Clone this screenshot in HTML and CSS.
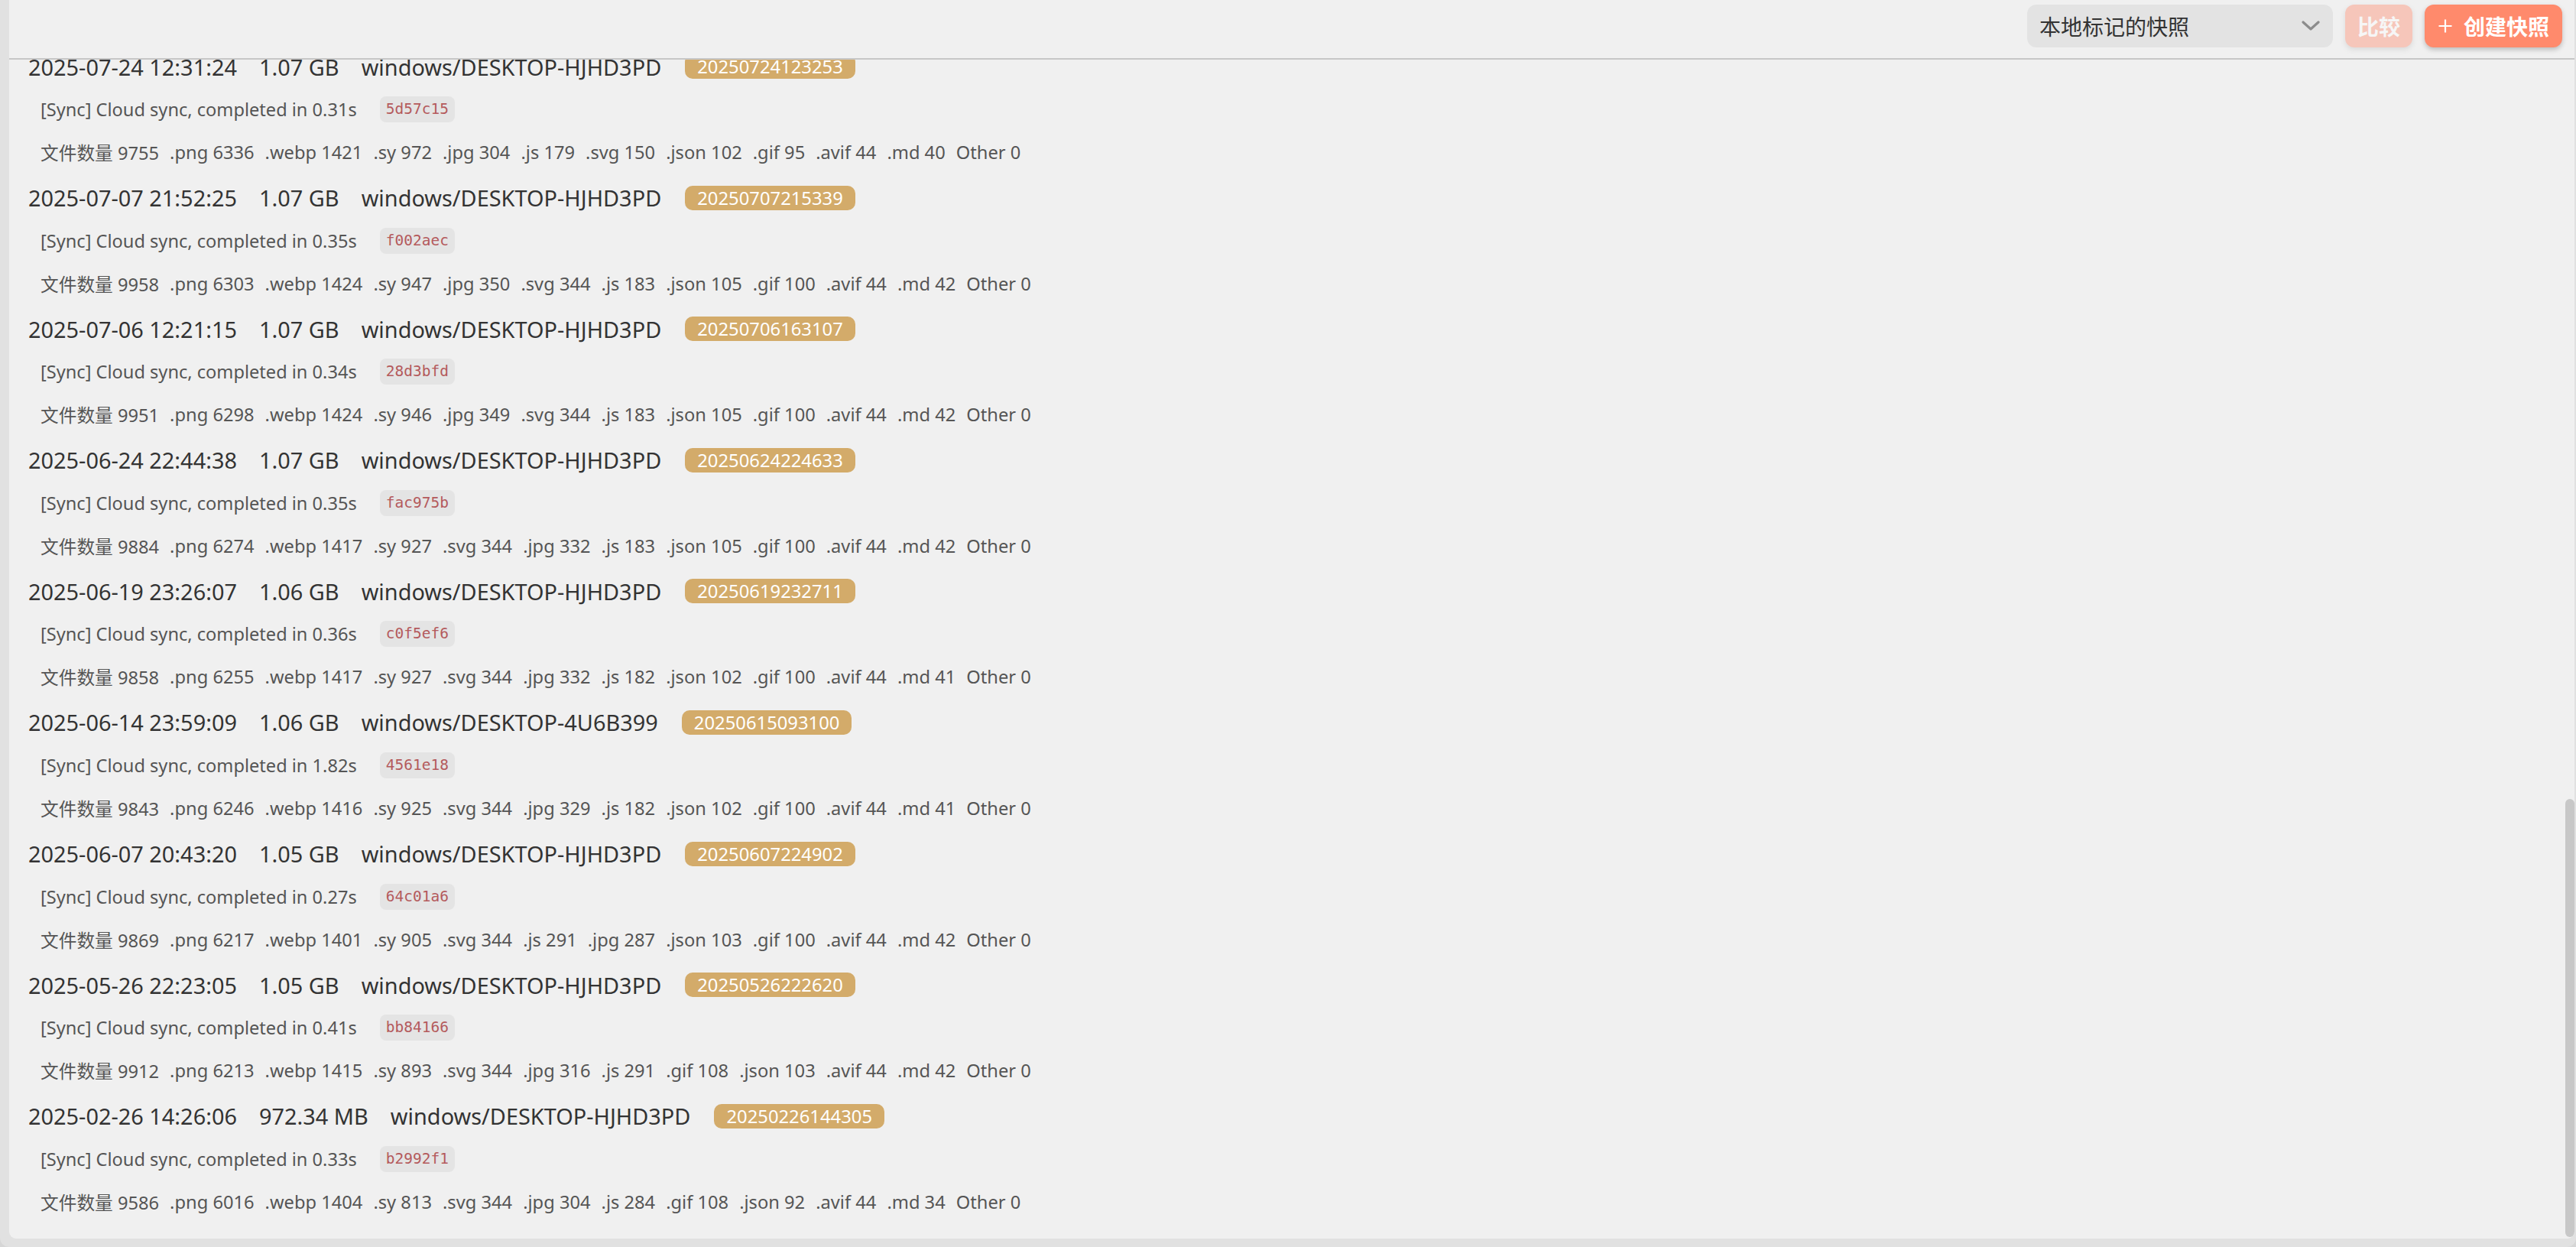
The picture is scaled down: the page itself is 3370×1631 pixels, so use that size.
FILE: index.html
```html
<!DOCTYPE html>
<html lang="zh-CN">
<head>
<meta charset="utf-8">
<title>快照</title>
<link rel="stylesheet" href="styles.css">
</head>
<body>
<div class="frame">
  <div class="panel">
    <div class="toolbar">
      <div class="select">
        <span class="select-text">本地标记的快照</span>
        <svg class="chevron" width="24" height="14" viewBox="0 0 24 14"><polyline points="2,2 12,11 22,2" fill="none" stroke="#8c8c8c" stroke-width="3.2" stroke-linecap="round" stroke-linejoin="round"/></svg>
      </div>
      <button class="btn btn-disabled">比较</button>
      <button class="btn"><svg class="plus" width="18" height="18" viewBox="0 0 18 18"><path d="M9 0.5 V17.5 M0.5 9 H17.5" stroke="#fff" stroke-width="2.2" fill="none"/></svg>创建快照</button>
    </div>
    <div class="list">
      <div class="list-inner">

        <div class="row">
          <div class="head"><span>2025-07-24 12:31:24</span><span>1.07 GB</span><span>windows/DESKTOP-HJHD3PD</span><span class="badge">20250724123253</span></div>
          <div class="sync"><span>[Sync] Cloud sync, completed in 0.31s</span><code class="hash">5d57c15</code></div>
          <div class="files"><span>文件数量 9755</span><span>.png 6336</span><span>.webp 1421</span><span>.sy 972</span><span>.jpg 304</span><span>.js 179</span><span>.svg 150</span><span>.json 102</span><span>.gif 95</span><span>.avif 44</span><span>.md 40</span><span>Other 0</span></div>
        </div>

        <div class="row">
          <div class="head"><span>2025-07-07 21:52:25</span><span>1.07 GB</span><span>windows/DESKTOP-HJHD3PD</span><span class="badge">20250707215339</span></div>
          <div class="sync"><span>[Sync] Cloud sync, completed in 0.35s</span><code class="hash">f002aec</code></div>
          <div class="files"><span>文件数量 9958</span><span>.png 6303</span><span>.webp 1424</span><span>.sy 947</span><span>.jpg 350</span><span>.svg 344</span><span>.js 183</span><span>.json 105</span><span>.gif 100</span><span>.avif 44</span><span>.md 42</span><span>Other 0</span></div>
        </div>

        <div class="row">
          <div class="head"><span>2025-07-06 12:21:15</span><span>1.07 GB</span><span>windows/DESKTOP-HJHD3PD</span><span class="badge">20250706163107</span></div>
          <div class="sync"><span>[Sync] Cloud sync, completed in 0.34s</span><code class="hash">28d3bfd</code></div>
          <div class="files"><span>文件数量 9951</span><span>.png 6298</span><span>.webp 1424</span><span>.sy 946</span><span>.jpg 349</span><span>.svg 344</span><span>.js 183</span><span>.json 105</span><span>.gif 100</span><span>.avif 44</span><span>.md 42</span><span>Other 0</span></div>
        </div>

        <div class="row">
          <div class="head"><span>2025-06-24 22:44:38</span><span>1.07 GB</span><span>windows/DESKTOP-HJHD3PD</span><span class="badge">20250624224633</span></div>
          <div class="sync"><span>[Sync] Cloud sync, completed in 0.35s</span><code class="hash">fac975b</code></div>
          <div class="files"><span>文件数量 9884</span><span>.png 6274</span><span>.webp 1417</span><span>.sy 927</span><span>.svg 344</span><span>.jpg 332</span><span>.js 183</span><span>.json 105</span><span>.gif 100</span><span>.avif 44</span><span>.md 42</span><span>Other 0</span></div>
        </div>

        <div class="row">
          <div class="head"><span>2025-06-19 23:26:07</span><span>1.06 GB</span><span>windows/DESKTOP-HJHD3PD</span><span class="badge">20250619232711</span></div>
          <div class="sync"><span>[Sync] Cloud sync, completed in 0.36s</span><code class="hash">c0f5ef6</code></div>
          <div class="files"><span>文件数量 9858</span><span>.png 6255</span><span>.webp 1417</span><span>.sy 927</span><span>.svg 344</span><span>.jpg 332</span><span>.js 182</span><span>.json 102</span><span>.gif 100</span><span>.avif 44</span><span>.md 41</span><span>Other 0</span></div>
        </div>

        <div class="row">
          <div class="head"><span>2025-06-14 23:59:09</span><span>1.06 GB</span><span>windows/DESKTOP-4U6B399</span><span class="badge">20250615093100</span></div>
          <div class="sync"><span>[Sync] Cloud sync, completed in 1.82s</span><code class="hash">4561e18</code></div>
          <div class="files"><span>文件数量 9843</span><span>.png 6246</span><span>.webp 1416</span><span>.sy 925</span><span>.svg 344</span><span>.jpg 329</span><span>.js 182</span><span>.json 102</span><span>.gif 100</span><span>.avif 44</span><span>.md 41</span><span>Other 0</span></div>
        </div>

        <div class="row">
          <div class="head"><span>2025-06-07 20:43:20</span><span>1.05 GB</span><span>windows/DESKTOP-HJHD3PD</span><span class="badge">20250607224902</span></div>
          <div class="sync"><span>[Sync] Cloud sync, completed in 0.27s</span><code class="hash">64c01a6</code></div>
          <div class="files"><span>文件数量 9869</span><span>.png 6217</span><span>.webp 1401</span><span>.sy 905</span><span>.svg 344</span><span>.js 291</span><span>.jpg 287</span><span>.json 103</span><span>.gif 100</span><span>.avif 44</span><span>.md 42</span><span>Other 0</span></div>
        </div>

        <div class="row">
          <div class="head"><span>2025-05-26 22:23:05</span><span>1.05 GB</span><span>windows/DESKTOP-HJHD3PD</span><span class="badge">20250526222620</span></div>
          <div class="sync"><span>[Sync] Cloud sync, completed in 0.41s</span><code class="hash">bb84166</code></div>
          <div class="files"><span>文件数量 9912</span><span>.png 6213</span><span>.webp 1415</span><span>.sy 893</span><span>.svg 344</span><span>.jpg 316</span><span>.js 291</span><span>.gif 108</span><span>.json 103</span><span>.avif 44</span><span>.md 42</span><span>Other 0</span></div>
        </div>

        <div class="row">
          <div class="head"><span>2025-02-26 14:26:06</span><span>972.34 MB</span><span>windows/DESKTOP-HJHD3PD</span><span class="badge">20250226144305</span></div>
          <div class="sync"><span>[Sync] Cloud sync, completed in 0.33s</span><code class="hash">b2992f1</code></div>
          <div class="files"><span>文件数量 9586</span><span>.png 6016</span><span>.webp 1404</span><span>.sy 813</span><span>.svg 344</span><span>.jpg 304</span><span>.js 284</span><span>.gif 108</span><span>.json 92</span><span>.avif 44</span><span>.md 34</span><span>Other 0</span></div>
        </div>

      </div>
    </div>
    <div class="thumb"></div>
  </div>
</div>
</body>
</html>
```
FILE: styles.css
```css
html, body {
  margin: 0;
  padding: 0;
  height: 100%;
}
body {
  background: #d6d6d6;
  font-family: "Noto Sans", "Noto Sans CJK SC", sans-serif;
  overflow: hidden;
}
.frame {
  height: 1631px;
  background: #e1e1e1;
  border-bottom-left-radius: 12px;
  border-bottom-right-radius: 12px;
  padding: 0 2px 11px 12px;
  box-sizing: border-box;
}
.panel {
  position: relative;
  height: 1620px;
  background: #f0f0f0;
  border-bottom-left-radius: 9px;
  border-bottom-right-radius: 9px;
  display: flex;
  flex-direction: column;
  overflow: hidden;
}
.toolbar {
  height: 78px;
  box-sizing: border-box;
  flex: none;
  border-bottom: 2px solid #c7c7c7;
  display: flex;
  justify-content: flex-end;
  align-items: flex-start;
  gap: 16px;
  padding: 6px 16px 0 0;
}
.select {
  width: 400px;
  height: 56px;
  box-sizing: border-box;
  background: #e3e3e3;
  border-radius: 12px;
  display: flex;
  align-items: center;
  justify-content: space-between;
  padding: 0 17px 0 16px;
  color: #333;
  font-size: 28px;
}
.chevron {
  display: block;
}
.btn {
  height: 56px;
  border: none;
  border-radius: 12px;
  background: #ff8a6c;
  color: #fff;
  font-family: "Noto Sans CJK SC", sans-serif;
  font-weight: 700;
  font-size: 28px;
  padding: 0 17px 0 18px;
  display: flex;
  align-items: center;
  gap: 15px;
  box-shadow: 0 3px 6px rgba(0, 0, 0, 0.22);
}
.btn-disabled {
  opacity: 0.4;
  padding: 0 16px;
}
.plus {
  display: block;
}
.list {
  flex: 1;
  overflow: hidden;
}
.list-inner {
  margin-top: -19px;
  padding-left: 25px;
}
.row {
  padding-bottom: 3.6px;
}
.head {
  height: 56px;
  display: flex;
  align-items: center;
  gap: 29px;
  font-size: 28.9px;
  color: #333;
  white-space: nowrap;
}
.badge {
  height: 32px;
  line-height: 32px;
  padding: 0 16px;
  border-radius: 10px;
  background: #d3ab6a;
  color: #fff;
  font-size: 23.8px;
  margin-left: 2px;
}
.sync {
  height: 56px;
  display: flex;
  align-items: center;
  gap: 30px;
  padding-left: 16px;
  font-size: 23.6px;
  color: #555;
  white-space: nowrap;
}
.hash {
  height: 34px;
  line-height: 34px;
  padding: 0 8px;
  border-radius: 8px;
  background: #e4e4e4;
  color: #b45a5c;
  font-family: "DejaVu Sans Mono", monospace;
  font-size: 19.5px;
}
.files {
  height: 56px;
  display: flex;
  align-items: center;
  gap: 14px;
  padding-left: 16px;
  font-size: 23.7px;
  color: #555;
  white-space: nowrap;
}
.thumb {
  position: absolute;
  right: 0;
  bottom: 2px;
  width: 12px;
  height: 573px;
  border-radius: 6px;
  background: #c8c8c8;
}
```
